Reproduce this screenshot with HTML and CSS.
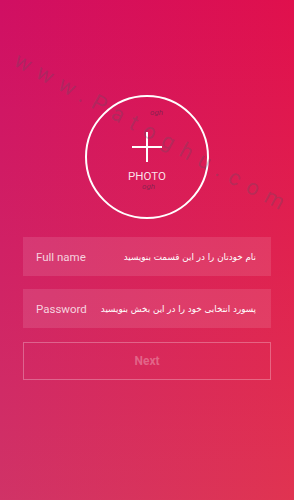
FILE: index.html
```html
<!DOCTYPE html>
<html lang="en">
<head>
<meta charset="utf-8">
<title>Sign up</title>
<link rel="stylesheet" href="styles.css">
</head>
<body>
<div class="screen">
  <div class="photo">
    <svg class="plus" width="30" height="30" viewBox="0 0 30 30">
      <path d="M15 0V30M0 15H30" stroke="#fff" stroke-width="2" fill="none"/>
    </svg>
    <span class="photo-label">PHOTO</span>
  </div>
  <div class="form">
    <div class="field">
      <span class="label">Full name</span>
      <span class="hint" dir="rtl">نام خودتان را در این قسمت بنویسید</span>
    </div>
    <div class="field">
      <span class="label">Password</span>
      <span class="hint" dir="rtl">پسورد انتخابی خود را در این بخش بنویسید</span>
    </div>
    <div class="next">Next</div>
  </div>
  <div class="watermark">www.Patoghu.com</div>
  <span class="mark mark-top">ogh</span>
  <span class="mark mark-bottom">ogh</span>
</div>
</body>
</html>
```
FILE: styles.css
```css
html, body {
  margin: 0;
  padding: 0;
}
body {
  width: 294px;
  height: 500px;
  overflow: hidden;
  font-family: Roboto, "Liberation Sans", sans-serif;
}
.screen {
  position: relative;
  width: 294px;
  height: 500px;
  box-sizing: border-box;
  padding-top: 95px;
  display: flex;
  flex-direction: column;
  align-items: center;
  background: linear-gradient(to bottom, #000 0%, rgb(0, 38, 6) 100%),
              linear-gradient(to right, #d00f63 0%, #e0104d 100%);
  background-blend-mode: screen;
  overflow: hidden;
}
.photo {
  width: 124px;
  height: 124px;
  box-sizing: border-box;
  border: 2px solid #fff;
  border-radius: 50%;
  display: flex;
  flex-direction: column;
  align-items: center;
  justify-content: center;
  gap: 8px;
}
.plus {
  display: block;
}
.photo-label {
  font-size: 11.5px;
  line-height: 13px;
  color: rgba(255, 255, 255, 0.88);
}
.form {
  width: 248px;
  margin-top: 18px;
  display: flex;
  flex-direction: column;
  gap: 13px;
}
.field {
  height: 39px;
  box-sizing: border-box;
  padding: 0 15px 0 13px;
  background: rgba(255, 255, 255, 0.11);
  display: flex;
  align-items: center;
  justify-content: space-between;
}
.label {
  font-size: 11.5px;
  color: rgba(255, 255, 255, 0.78);
}
.hint {
  font-family: "DejaVu Sans", sans-serif;
  font-size: 8.8px;
  color: #fff;
}
.next {
  margin-top: 1px;
  height: 38px;
  box-sizing: border-box;
  border: 1px solid rgba(255, 255, 255, 0.28);
  display: flex;
  align-items: center;
  justify-content: center;
  font-size: 12px;
  font-weight: 700;
  color: rgba(255, 255, 255, 0.28);
}
.watermark {
  position: absolute;
  left: 16px;
  top: 46px;
  transform-origin: left center;
  transform: rotate(28.5deg);
  font-size: 22px;
  letter-spacing: 8.5px;
  color: rgba(90, 80, 100, 0.3);
  white-space: nowrap;
  pointer-events: none;
}
.mark {
  position: absolute;
  font-size: 8px;
  font-style: italic;
  color: rgba(70, 40, 70, 0.55);
}
.mark-top {
  left: 150px;
  top: 108px;
}
.mark-bottom {
  left: 142px;
  top: 182px;
}
```
